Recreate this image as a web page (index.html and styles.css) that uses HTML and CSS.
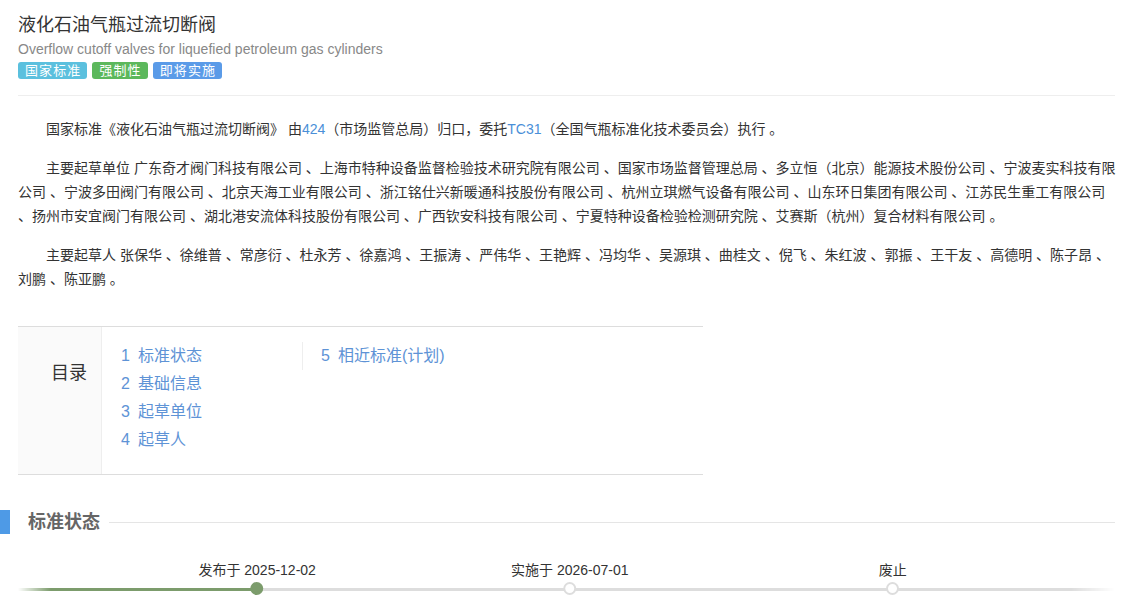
FILE: index.html
```html
<!DOCTYPE html>
<html lang="zh-CN">
<head>
<meta charset="utf-8">
<title>液化石油气瓶过流切断阀</title>
<link rel="stylesheet" href="styles.css">
</head>
<body>
<div class="page">
  <header class="head">
    <h1 class="title">液化石油气瓶过流切断阀</h1>
    <div class="subtitle">Overflow cutoff valves for liquefied petroleum gas cylinders</div>
    <div class="badges">
      <span class="badge badge-info">国家标准</span>
      <span class="badge badge-success">强制性</span>
      <span class="badge badge-primary">即将实施</span>
    </div>
  </header>

  <div class="intro">
    <p>国家标准《液化石油气瓶过流切断阀》 由<a class="link" href="#">424</a>（市场监管总局）归口，委托<a class="link" href="#">TC31</a>（全国气瓶标准化技术委员会）执行 。</p>
    <p>主要起草单位 广东奇才阀门科技有限公司 、上海市特种设备监督检验技术研究院有限公司 、国家市场监督管理总局 、多立恒（北京）能源技术股份公司 、宁波麦实科技有限公司 、宁波多田阀门有限公司 、北京天海工业有限公司 、浙江铭仕兴新暖通科技股份有限公司 、杭州立琪燃气设备有限公司 、山东环日集团有限公司 、江苏民生重工有限公司 、扬州市安宜阀门有限公司 、湖北港安流体科技股份有限公司 、广西钦安科技有限公司 、宁夏特种设备检验检测研究院 、艾赛斯（杭州）复合材料有限公司 。</p>
    <p>主要起草人 张保华 、徐维普 、常彦衍 、杜永芳 、徐嘉鸿 、王振涛 、严伟华 、王艳辉 、冯均华 、吴源琪 、曲桂文 、倪飞 、朱红波 、郭振 、王干友 、高德明 、陈子昂 、刘鹏 、陈亚鹏 。</p>
  </div>

  <div class="toc">
    <div class="toc-label">目录</div>
    <div class="toc-cols">
      <ul class="toc-col">
        <li><a class="toc-link" href="#"><span class="toc-num">1</span>标准状态</a></li>
        <li><a class="toc-link" href="#"><span class="toc-num">2</span>基础信息</a></li>
        <li><a class="toc-link" href="#"><span class="toc-num">3</span>起草单位</a></li>
        <li><a class="toc-link" href="#"><span class="toc-num">4</span>起草人</a></li>
      </ul>
      <ul class="toc-col toc-col-sep">
        <li><a class="toc-link" href="#"><span class="toc-num">5</span>相近标准(计划)</a></li>
      </ul>
    </div>
  </div>

  <div class="section-head">
    <span class="section-bar"></span>
    <h2 class="section-title">标准状态</h2>
    <span class="section-rule"></span>
  </div>

  <div class="timeline">
    <div class="track">
      <div class="track-done" style="width:21.8%"></div>
    </div>
    <div class="node node-done" style="left:21.8%">
      <span class="node-label">发布于 2025-12-02</span>
      <span class="node-dot"></span>
    </div>
    <div class="node" style="left:50.3%">
      <span class="node-label">实施于 2026-07-01</span>
      <span class="node-dot"></span>
    </div>
    <div class="node" style="left:79.75%">
      <span class="node-label">废止</span>
      <span class="node-dot"></span>
    </div>
  </div>
</div>
</body>
</html>
```

FILE: styles.css
```css
html, body {
  margin: 0;
  padding: 0;
  background: #fff;
}
body {
  font-family: "Liberation Sans", "Noto Sans CJK SC", sans-serif;
  color: #333;
  font-size: 14px;
}
.page {
  padding: 13px 15px 0 18px;
}
.title {
  margin: 0;
  font-size: 18px;
  line-height: 24px;
  font-weight: normal;
  color: #333;
}
.subtitle {
  font-size: 14px;
  line-height: 24px;
  color: #888;
}
.badges {
  display: flex;
  gap: 5px;
  margin-top: 1px;
  padding-bottom: 16px;
  border-bottom: 1px solid #eee;
}
.badge {
  display: inline-block;
  height: 17px;
  line-height: 17px;
  padding: 0 6px 0 7px;
  font-size: 13px;
  letter-spacing: 1.1px;
  color: #fff;
  border-radius: 3px;
}
.badge-info { background: #5bc0de; }
.badge-success { background: #5cb85c; }
.badge-primary { background: #5a9be8; }

.intro {
  padding-top: 21px;
  margin-right: -3px;
}
.intro p {
  margin: 0 0 15px;
  line-height: 24px;
  text-indent: 2em;
  font-size: 14px;
}
.link {
  color: #4a8fd8;
  text-decoration: none;
}

.toc {
  display: flex;
  width: 685px;
  margin-top: 35px;
  border-top: 1px solid #ddd;
  border-bottom: 1px solid #ddd;
}
.toc-label {
  width: 69px;
  flex: none;
  background: #fafafa;
  border-right: 1px solid #eee;
  text-align: right;
  padding: 32px 14px 0 0;
  font-size: 18px;
  line-height: 28px;
  color: #333;
}
.toc-cols {
  display: flex;
  align-items: flex-start;
  padding: 15px 0 20px;
}
.toc-col {
  list-style: none;
  margin: 0;
  width: 181px;
  padding: 0 0 0 19px;
}
.toc-col-sep {
  border-left: 1px solid #eee;
  padding-left: 18px;
}
.toc-col li {
  line-height: 28px;
  font-size: 16px;
}
.toc-link {
  color: #5e93d6;
  text-decoration: none;
}
.toc-num {
  margin-right: 8px;
}

.section-head {
  display: flex;
  align-items: center;
  margin: 35px 0 0 -18px;
}
.section-bar {
  width: 10px;
  height: 24px;
  background: #4e9ae6;
  flex: none;
}
.section-title {
  margin: 0 9px 0 18px;
  font-size: 18px;
  line-height: 24px;
  font-weight: bold;
  color: #666;
}
.section-rule {
  flex: 1;
  height: 1px;
  background: #e5e5e5;
}

.timeline {
  position: relative;
  height: 44px;
  margin-top: 26px;
}
.track {
  position: absolute;
  left: 0;
  right: 0;
  top: 28px;
  height: 3px;
  background: #ddd;
  -webkit-mask-image: linear-gradient(to right, transparent 0, #000 3%, #000 96%, transparent 100%);
  mask-image: linear-gradient(to right, transparent 0, #000 3%, #000 96%, transparent 100%);
}
.track-done {
  height: 100%;
  background: #7c9c6c;
}
.node {
  position: absolute;
  top: 0;
  transform: translateX(-50%);
  display: flex;
  flex-direction: column;
  align-items: center;
}
.node-label {
  font-size: 14px;
  line-height: 20px;
  white-space: nowrap;
  color: #333;
}
.node-dot {
  margin-top: 2px;
  width: 9px;
  height: 9px;
  border-radius: 50%;
  background: #fff;
  border: 2px solid #ddd;
}
.node-done .node-dot {
  background: #7c9c6c;
  border-color: #7c9c6c;
}
```
